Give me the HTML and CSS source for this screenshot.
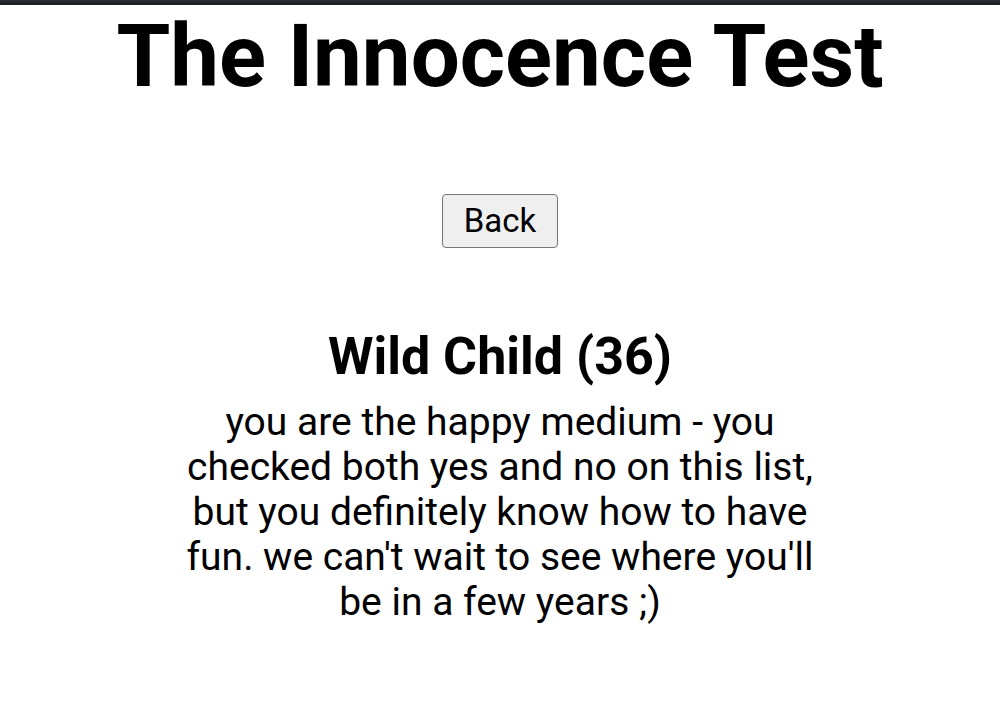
FILE: index.html
```html
<!DOCTYPE html>
<html>
<head>
<meta charset="utf-8">
<link rel="stylesheet" href="styles.css">
</head>
<body>
<div class="topbar"></div>
<main class="page">
  <h1 class="title">The Innocence Test</h1>
  <button class="back">Back</button>
  <section class="result">
    <h2 class="result-title">Wild Child (36)</h2>
    <p class="result-text">you are the happy medium - you checked both yes and no on this list, but you definitely know how to have fun. we can't wait to see where you'll be in a few years ;)</p>
  </section>
</main>
</body>
</html>
```
FILE: styles.css
```css
html, body {
  margin: 0;
  padding: 0;
  background: #fff;
}
body {
  font-family: Roboto, "Liberation Sans", sans-serif;
  color: #000;
}
.topbar {
  height: 5px;
  background: linear-gradient(#2a2d31, #1b1d20);
}
.page {
  display: flex;
  flex-direction: column;
  align-items: center;
}
.title {
  margin: 0;
  font-size: 87px;
  font-weight: 700;
  line-height: 102px;
}
.back {
  margin-top: 87px;
  font-family: Roboto, "Liberation Sans", sans-serif;
  font-size: 33px;
  line-height: 39px;
  padding: 6px 21px 7px;
  background: #efefef;
  border: 1.5px solid #767676;
  border-radius: 4px;
  color: #000;
}
.result {
  width: 660px;
  margin-top: 78px;
  text-align: center;
}
.result-title {
  margin: 0;
  font-size: 52px;
  font-weight: 700;
  line-height: 61px;
}
.result-text {
  margin: 13px 0 0;
  font-size: 39px;
  line-height: 45px;
}
```
